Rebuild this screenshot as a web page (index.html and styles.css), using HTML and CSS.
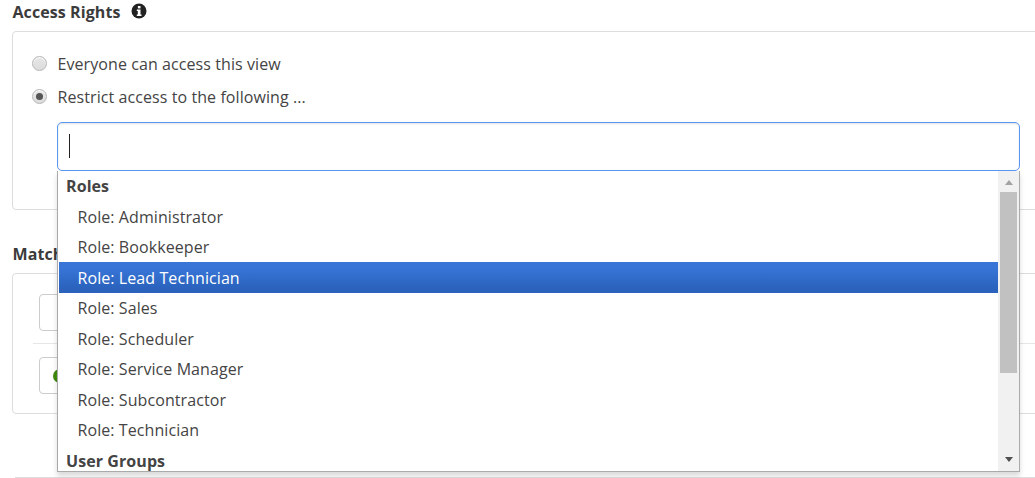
FILE: index.html
```html
<!DOCTYPE html>
<html lang="en">
<head>
<meta charset="utf-8">
<title>Access Rights</title>
<link rel="stylesheet" href="styles.css">
</head>
<body>
<main class="page">
  <h2 class="section-title access-title">Access Rights
    <svg class="info" viewBox="0 0 16 16" width="16" height="16" aria-hidden="true"><circle cx="8" cy="8" r="7.5" fill="#222"/><rect x="6.9" y="3" width="2.6" height="2.4" fill="#fff"/><path d="M5.8 6.6h3.7v4.9h1v1.5H5.8v-1.5h1V8.1h-1z" fill="#fff"/></svg>
  </h2>
  <section class="panel access-panel">
    <label class="radio-row"><span class="radio"></span>Everyone can access this view</label>
    <label class="radio-row"><span class="radio checked"></span>Restrict access to the following ...</label>
    <div class="combo">
      <div class="combo-input"><span class="caret"></span></div>
      <div class="dropdown">
        <div class="list">
          <div class="group first">Roles</div>
          <div class="item">Role: Administrator</div>
          <div class="item">Role: Bookkeeper</div>
          <div class="item active">Role: Lead Technician</div>
          <div class="item">Role: Sales</div>
          <div class="item">Role: Scheduler</div>
          <div class="item">Role: Service Manager</div>
          <div class="item">Role: Subcontractor</div>
          <div class="item">Role: Technician</div>
          <div class="group">User Groups</div>
        </div>
        <div class="scrollbar">
          <span class="arrow up"></span>
          <span class="track"><span class="thumb"></span></span>
          <span class="arrow down"></span>
        </div>
      </div>
    </div>
  </section>
  <h2 class="section-title match-title">Match</h2>
  <section class="panel match-panel">
    <div class="match-row"><div class="field"></div></div>
    <div class="match-row last"><div class="field small"><span class="dot"></span></div></div>
  </section>
  <div class="footer-line"></div>
</main>
</body>
</html>
```
FILE: styles.css
```css
* { box-sizing: border-box; }
html, body { margin: 0; height: 478px; overflow: hidden; background: #fff; }
body { font-family: "Open Sans", "Liberation Sans", sans-serif; font-size: 16px; letter-spacing: .08px; color: #444; }
.page { width: 1060px; height: 478px; padding-left: 12px; display: flex; flex-direction: column; }
.section-title { margin: 0; padding-left: .5px; font-size: 16px; font-weight: 700; line-height: 22px; color: #3b3b3b; }
.access-title { display: flex; align-items: center; gap: 11px; height: 23px; }
.info { margin-top: -2px; }
.panel { border: 1px solid #ddd; border-radius: 4px; background: #fff; }
.access-panel { margin-top: 8px; height: 179px; padding: 15px 0 0 19px; }
.radio-row { display: flex; align-items: center; height: 33.5px; color: #444; }
.radio { width: 15px; height: 15px; margin: -1px 10.5px 0 0; border-radius: 50%; border: 1px solid #b5b5b5; background: linear-gradient(#e6e6e6, #dcdcdc); box-shadow: inset 0 1px 1px #fff; display: flex; align-items: center; justify-content: center; }
.radio.checked::after { content: ""; width: 7px; height: 7px; border-radius: 50%; background: #555; }
.combo { position: relative; width: 963px; margin: 8px 0 0 25px; }
.combo-input { height: 49px; border: 1px solid #5a97f2; border-radius: 5px; background: #fff; box-shadow: inset 0 1px 2px rgba(0,0,0,.12); padding: 9px 0 0 11px; }
.caret { display: block; width: 1px; height: 24px; margin-top: 2px; background: #222; }
.dropdown { position: absolute; left: 0; top: 49px; width: 963px; height: 301px; z-index: 5; display: flex; background: #fff; border: 1px solid #aaa; border-top: 0; box-shadow: 0 4px 5px rgba(0,0,0,.15); overflow: hidden; }
.list { flex: 1; padding-left: 1px; min-width: 0; }
.group { height: 29.9px; line-height: 32px; padding-left: 7px; font-weight: 700; color: #444; }
.group.first { line-height: 30px; }
.item { height: 30.5px; line-height: 32.5px; padding-left: 18.5px; color: #444; }
.item.active { color: #fff; background: linear-gradient(#3875d7 20%, #2a62bc 90%); box-shadow: 0 1px 0 #2a62bc; }
.scrollbar { width: 21px; background: #f1f1f1; display: flex; flex-direction: column; align-items: center; flex: none; }
.arrow { flex: none; width: 0; height: 0; border-left: 4.5px solid transparent; border-right: 4.5px solid transparent; }
.arrow.up { margin-top: 9px; border-bottom: 5px solid #a3a3a3; }
.arrow.down { margin-bottom: 9px; border-top: 5px solid #505050; }
.track { flex: 1; width: 100%; padding: 7px 2px 0 2px; }
.thumb { display: block; height: 181px; background: #c1c1c1; }
.match-title { margin-top: 33px; }
.match-panel { margin-top: 8px; height: 141px; padding: 20px 0 0 26px; }
.match-row { height: 50px; border-bottom: 1px solid #e6e6e6; margin-left: -6px; padding-left: 6px; }
.match-row.last { border-bottom: 0; padding-top: 13px; height: auto; }
.field { width: 60px; height: 37px; border: 1px solid #ccc; border-radius: 4px; background: #fff; }
.field.small { padding: 11px 0 0 13px; }
.dot { display: block; width: 14px; height: 14px; border-radius: 50%; background: #4a9a10; border: 3px solid #3f8a0c; }
.footer-line { margin-top: 63px; margin-left: 3px; height: 1px; background: #ddd; flex: none; }
```
